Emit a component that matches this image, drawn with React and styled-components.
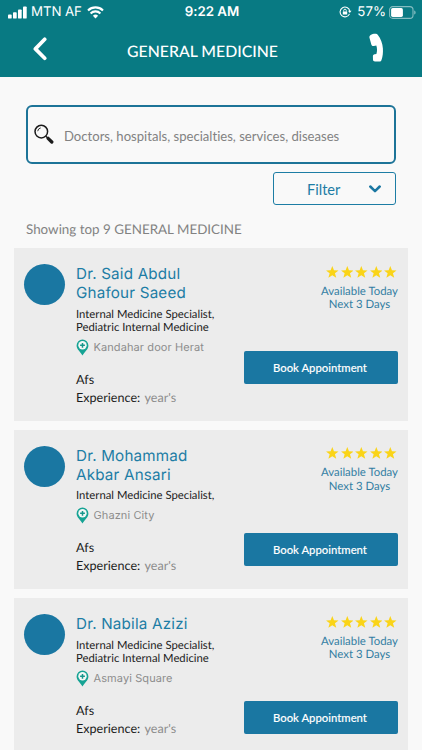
import React, { useState } from 'react'
import styled, { createGlobalStyle } from 'styled-components'

const doctors = [
  {
    id: 1,
    name: ['Dr. Said Abdul', 'Ghafour Saeed'],
    specialties: ['Internal Medicine Specialist,', 'Pediatric Internal Medicine'],
    location: 'Kandahar door Herat'
  },
  {
    id: 2,
    name: ['Dr. Mohammad', 'Akbar Ansari'],
    specialties: ['Internal Medicine Specialist,'],
    location: 'Ghazni City'
  },
  {
    id: 3,
    name: ['Dr. Nabila Azizi'],
    specialties: ['Internal Medicine Specialist,', 'Pediatric Internal Medicine'],
    location: 'Asmayi Square'
  }
]

const Signal = () => (
  <svg width="19" height="13" viewBox="0 0 19 13" fill="#fff">
    <rect x="0" y="8.6" width="3.7" height="4" rx="0.9" />
    <rect x="5" y="6.2" width="3.7" height="6.4" rx="0.9" />
    <rect x="10" y="3.4" width="3.7" height="9.2" rx="0.9" />
    <rect x="15" y="0.4" width="3.7" height="12.2" rx="0.9" />
  </svg>
)

const Wifi = () => (
  <svg width="17" height="13" viewBox="0 0 17 13" fill="none" stroke="#fff" strokeWidth="2.1">
    <path d="M1 4.4a10.9 10.9 0 0 1 15 0" />
    <path d="M3.6 7.4a7 7 0 0 1 9.8 0" />
    <path d="M8.5 12.4 5.9 9.7a3.8 3.8 0 0 1 5.2 0z" fill="#fff" stroke="none" />
  </svg>
)

const RotationLock = () => (
  <svg width="13" height="12" viewBox="0 0 13 12" fill="none" stroke="#fff" strokeWidth="1.1">
    <path d="M10.5 7.9A4.9 4.9 0 1 1 10.8 5" />
    <path d="M9 4.8h3.5l-1.7 2.3z" fill="#fff" stroke="none" />
    <rect x="3.8" y="5.4" width="4.4" height="3.2" rx="0.4" fill="#fff" stroke="none" />
    <path d="M4.7 5.6V4.5a1.3 1.3 0 0 1 2.6 0v1.1" strokeWidth="0.9" />
  </svg>
)

const Battery = () => (
  <svg width="27" height="13" viewBox="0 0 27 13">
    <rect x="0.6" y="0.6" width="23.4" height="11.8" rx="3.2" fill="none" stroke="#fff" strokeOpacity="0.5" strokeWidth="1.1" />
    <rect x="2.1" y="2.1" width="11.8" height="8.8" rx="1.6" fill="#fff" />
    <path d="M25.2 4.4c1.9.6 1.9 3.6 0 4.2z" fill="#fff" fillOpacity="0.5" />
  </svg>
)

const BackIcon = () => (
  <svg width="14" height="24" viewBox="0 0 14 24" fill="none" stroke="#fff" strokeWidth="3.7" strokeLinecap="round" strokeLinejoin="round">
    <path d="M11.7 2.3 2.4 11.9l9.3 9.4" />
  </svg>
)

const PhoneIcon = () => (
  <svg width="16" height="30" viewBox="0 0 16 30" fill="#fff">
    <path d="M2.6 1.9C4 1 6.200.5 7.900.7c.8.1 1.300.5 1.800 1.100 3.100 4 4.900 8.500 5.200 13.600.2 4.200-.1 8-1.400 11.500-.4 1.100-1 1.500-2.100 1.500H7c-1.200 0-1.900-.5-2-1.600l-.1-3.300c0-1.300.6-2 1.800-2.200l1.700-.2c.9-2.900.8-5.700-.1-8.500l-2.500.4c-1.200.2-2-.2-2.400-1.300L1.600 5.200c-.5-1.500-.2-2.500 1-3.300z" />
  </svg>
)

const SearchIcon = () => (
  <svg width="20" height="21" viewBox="0 0 20 21" fill="none" stroke="#1b1b1b">
    <circle cx="7.3" cy="7.6" r="6.3" strokeWidth="1.5" />
    <path d="M3.7 7.2A3.9 3.9 0 0 1 6.7 3.9" strokeWidth="0.9" />
    <path d="m11.9 12.2 1.9 1.9" strokeWidth="1.3" />
    <path d="m14.1 14.3 3.7 3.7" strokeWidth="3.3" strokeLinecap="round" />
  </svg>
)

const ChevronDown = () => (
  <svg width="12" height="8" viewBox="0 0 12 8" fill="none" stroke="#1a77a2" strokeWidth="2.5" strokeLinecap="round" strokeLinejoin="round">
    <path d="M1.3 1.5 6 6.1l4.7-4.6" />
  </svg>
)

const PinIcon = () => (
  <svg width="13" height="17" viewBox="0 0 13 17">
    <path d="M6.5.5a5.9 5.9 0 0 0-5.9 5.9c0 3.900 3.900 6.400 5.900 10 2-3.600 5.900-6.100 5.900-10A5.900 5.900 0 0 0 6.500.5z" fill="#16a394" />
    <circle cx="6.5" cy="6.3" r="4.2" fill="#f2f7f6" />
    <path d="M6.5 3.9v4.8M4.1 6.3h4.8" stroke="#16968b" strokeWidth="1.5" />
  </svg>
)

const Star = () => (
  <svg width="12.6" height="12" viewBox="0 0 24 23" fill="#fad418">
    <path d="M12 0l3.2 8.1 8.8.4-6.9 5.5 2.4 8.7L12 17.8l-7.5 4.9L6.900 14 0 8.500l8.800-.4z" />
  </svg>
)

const DoctorCard = ({ doctor }) => (
  <Card>
    <Avatar />
    <Details>
      <Name>
        {doctor.name.map((line) => <span key={line}>{line}</span>)}
      </Name>
      <Specialties>
        {doctor.specialties.map((line) => <span key={line}>{line}</span>)}
      </Specialties>
      <Location>
        <PinIcon />
        <span>{doctor.location}</span>
      </Location>
      <Fee>Afs</Fee>
      <Experience>Experience: <span>year's</span></Experience>
    </Details>
    <Booking>
      <Stars>
        {[1, 2, 3, 4, 5].map((n) => <Star key={n} />)}
      </Stars>
      <Availability>
        <span>Available Today</span>
        <span>Next 3 Days</span>
      </Availability>
      <BookButton>Book Appointment</BookButton>
    </Booking>
  </Card>
)

const App = () => {
  const [search, setSearch] = useState("")
  return (
    <MainContainer>
      <GlobalStyle />
      <Header>
        <StatusBar>
          <StatusLeft>
            <Signal />
            <Carrier>MTN AF</Carrier>
            <Wifi />
          </StatusLeft>
          <Clock>9:22 AM</Clock>
          <StatusRight>
            <RotationLock />
            <Percent>57%</Percent>
            <Battery />
          </StatusRight>
        </StatusBar>
        <NavBar>
          <IconButton aria-label="Back"><BackIcon /></IconButton>
          <Title>GENERAL MEDICINE</Title>
          <IconButton aria-label="Call" $end><PhoneIcon /></IconButton>
        </NavBar>
      </Header>
      <Content>
        <SearchBox>
          <SearchIcon />
          <SearchInput placeholder="Doctors, hospitals, specialties, services, diseases" value={search} onChange={(e)=>{setSearch(e.target.value)}}/>
        </SearchBox>
        <FilterButton>
          <span>Filter</span>
          <ChevronDown />
        </FilterButton>
        <ResultText>Showing top 9 GENERAL MEDICINE</ResultText>
        <CardList>
          {doctors.map((doctor) => <DoctorCard key={doctor.id} doctor={doctor} />)}
        </CardList>
      </Content>
    </MainContainer>
  )
}

export default App;

const GlobalStyle = createGlobalStyle`
  * {
    box-sizing: border-box;
  }
  body {
    margin: 0;
    background: #f9f9f9;
    font-family: Lato, sans-serif;
    font-variant-ligatures: none;
    text-rendering: geometricPrecision;
  }
  svg {
    display: block;
    flex-shrink: 0;
  }
  button {
    font-family: inherit;
    cursor: pointer;
  }
`

const MainContainer = styled.div`
  width: 422px;
  height: 750px;
  overflow: hidden;
  background: #f9f9f9;
`

const Header = styled.header`
  height: 77px;
  background: #087a83;
  color: #fff;
`

const StatusBar = styled.div`
  height: 24px;
  display: grid;
  grid-template-columns: 1fr auto 1fr;
  align-items: center;
  padding: 0 6px 0 8px;
  font-family: Inter, sans-serif;
  font-size: 13px;
`

const StatusLeft = styled.div`
  display: flex;
  align-items: center;
  gap: 4px;
`

const Carrier = styled.span`
  font-size: 13.3px;
  letter-spacing: -0.1px;
  margin-right: 1px;
`

const Clock = styled.span`
  font-size: 13.3px;
  font-weight: 600;
`

const StatusRight = styled.div`
  display: flex;
  align-items: center;
  justify-content: flex-end;
`

const Percent = styled.span`
  font-size: 13.3px;
  margin: 0 3px 0 5px;
`

const NavBar = styled.div`
  height: 53px;
  display: grid;
  grid-template-columns: 60px 1fr 60px;
  align-items: center;
  padding: 2px 33px 0;
`

const IconButton = styled.button`
  display: flex;
  justify-content: ${(p) => p.$end ? 'flex-end' : 'flex-start'};
  padding: 0 5px ${(p) => p.$end ? 7 : 5}px 0;
  background: none;
  border: none;
`

const Title = styled.h1`
  margin: 0 0 0 -17px;
  font-size: 15.8px;
  font-weight: 500;
  text-align: center;
  white-space: nowrap;
`

const Content = styled.main`
  display: flex;
  flex-direction: column;
  padding: 28px 14px 0;
`

const SearchBox = styled.label`
  height: 59px;
  margin: 0 12px;
  display: flex;
  align-items: center;
  gap: 10px;
  padding: 0 6px;
  border: 2px solid #1d7498;
  border-radius: 6px;
`

const SearchInput = styled.input`
  flex: 1;
  min-width: 0;
  padding: 3px 0 0;
  border: none;
  outline: none;
  background: none;
  color: #444;
  font-family: inherit;
  font-size: 13.1px;
  font-variant-ligatures: none;
  &::placeholder {
    color: #828282;
    opacity: 1;
  }
`

const FilterButton = styled.button`
  align-self: flex-end;
  width: 123px;
  height: 33px;
  margin: 8px 12px 0 0;
  padding: 2px 14px 0 33px;
  display: flex;
  align-items: center;
  justify-content: space-between;
  background: none;
  border: 1px solid #1d7da5;
  border-radius: 3px;
  color: #1d7da5;
  font-size: 14.6px;
  svg {
    margin-top: -2px;
  }
`

const ResultText = styled.p`
  height: 18px;
  margin: 15px 12px 10px;
  color: #828282;
  font-size: 13.4px;
  line-height: 18px;
`

const CardList = styled.div`
  display: flex;
  flex-direction: column;
  gap: 9.3px;
`

const Card = styled.article`
  display: grid;
  grid-template-columns: 52px 1fr 154px;
  padding: 16px 10px 14px;
  background: #ececec;
`

const Avatar = styled.div`
  width: 41px;
  height: 41px;
  border-radius: 50%;
  background: #1a77a2;
`

const Details = styled.div`
  min-width: 0;
  white-space: nowrap;
`

const Name = styled.h2`
  margin: 0;
  display: flex;
  flex-direction: column;
  color: #1d7da5;
  font-family: Inter, sans-serif;
  font-size: 15.2px;
  font-weight: 400;
  line-height: 19px;
  letter-spacing: 0.2px;
`

const Specialties = styled.div`
  margin-top: 5.5px;
  display: flex;
  flex-direction: column;
  color: #1c1c1c;
  font-size: 11.3px;
  line-height: 13.5px;
`

const Location = styled.div`
  height: 17px;
  margin-top: 4px;
  display: flex;
  align-items: center;
  gap: 4.5px;
  color: #8d8d8d;
  font-family: Inter, sans-serif;
  font-size: 11px;
  letter-spacing: 0.1px;
`

const Fee = styled.div`
  margin-top: 15px;
  color: #1c1c1c;
  font-size: 12.6px;
  line-height: 18px;
`

const Experience = styled.div`
  color: #1c1c1c;
  font-size: 12.6px;
  line-height: 18px;
  span {
    margin-left: 1px;
    color: #8d8d8d;
  }
`

const Booking = styled.div`
  display: flex;
  flex-direction: column;
  align-items: flex-end;
`

const Stars = styled.div`
  display: flex;
  gap: 2px;
  margin: 1.5px 1px 0 0;
`

const Availability = styled.div`
  margin-top: 7px;
  display: flex;
  flex-direction: column;
  align-items: center;
  color: #337ea3;
  font-size: 11.4px;
  line-height: 13.3px;
`

const BookButton = styled.button`
  width: 154px;
  height: 33px;
  margin-top: 39.8px;
  padding: 1px 2px 0 0;
  background: #1a77a2;
  border: none;
  border-radius: 2px;
  color: #fff;
  font-size: 11.3px;
  font-weight: 500;
  -webkit-text-stroke: 0.1px #fff;
`
